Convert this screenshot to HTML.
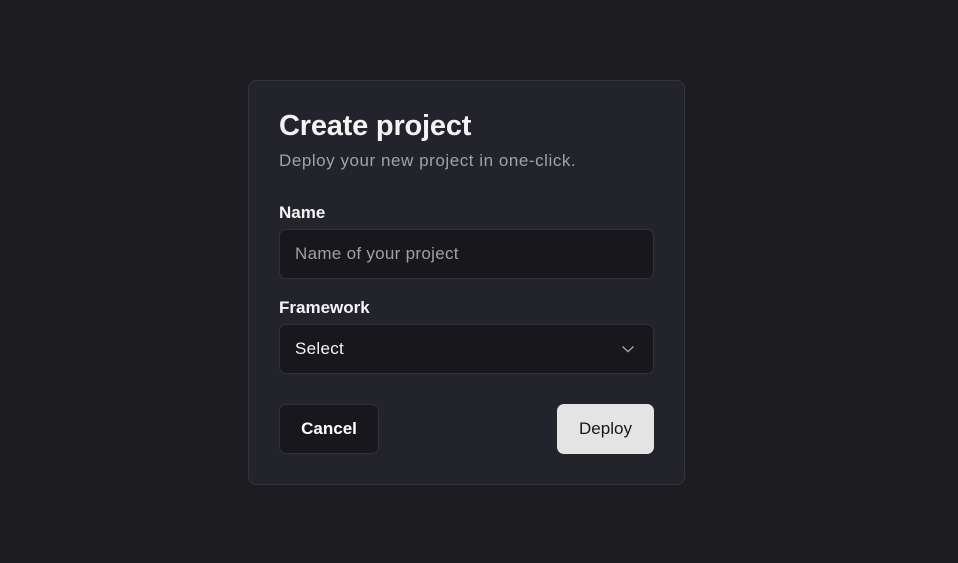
<!DOCTYPE html>
<html><head><style>
*{box-sizing:border-box;margin:0;padding:0}
body{width:958px;height:563px;background:#1d1d21;font-family:"Liberation Sans",sans-serif;position:relative;overflow:hidden}
.card{position:absolute;left:248px;top:80px;width:437px;height:405px;background:#23232b;border:1px solid #33333b;border-radius:8px}
.t{position:absolute;left:30px;top:29px;font-size:29px;font-weight:bold;color:#f4f4f5;letter-spacing:-0.2px}
.s{position:absolute;left:30px;top:70px;font-size:17px;color:#a1a1aa;letter-spacing:0.55px}
.l{position:absolute;left:30px;font-size:17px;font-weight:bold;color:#f4f4f5}
.in{position:absolute;left:30px;width:375px;height:50px;background:#18181c;border:1px solid #303038;border-radius:7px;font-size:17px;padding-left:15px;line-height:48px;letter-spacing:0.3px}
.b{position:absolute;top:323px;height:50px;border-radius:7px;font-size:17px;line-height:48px;text-align:center}
</style></head><body>
<div class="card">
<div class="t">Create project</div>
<div class="s">Deploy your new project in one-click.</div>
<div class="l" style="top:122px">Name</div>
<div class="in" style="top:148px;color:#9f9fa8">Name of your project</div>
<div class="l" style="top:217px">Framework</div>
<div class="in" style="top:243px;color:#f4f4f5">Select
<svg style="position:absolute;right:18px;top:19px" width="14" height="10" viewBox="0 0 14 10"><path d="M1.5 2.5l5.5 5 5.5-5" fill="none" stroke="#a1a1aa" stroke-width="1.4"/></svg></div>
<div class="b" style="left:30px;width:100px;background:#18181c;border:1px solid #303038;color:#fff;font-weight:bold">Cancel</div>
<div class="b" style="left:308px;width:97px;background:#e4e4e5;color:#18181b;line-height:50px">Deploy</div>
</div>
</body></html>
